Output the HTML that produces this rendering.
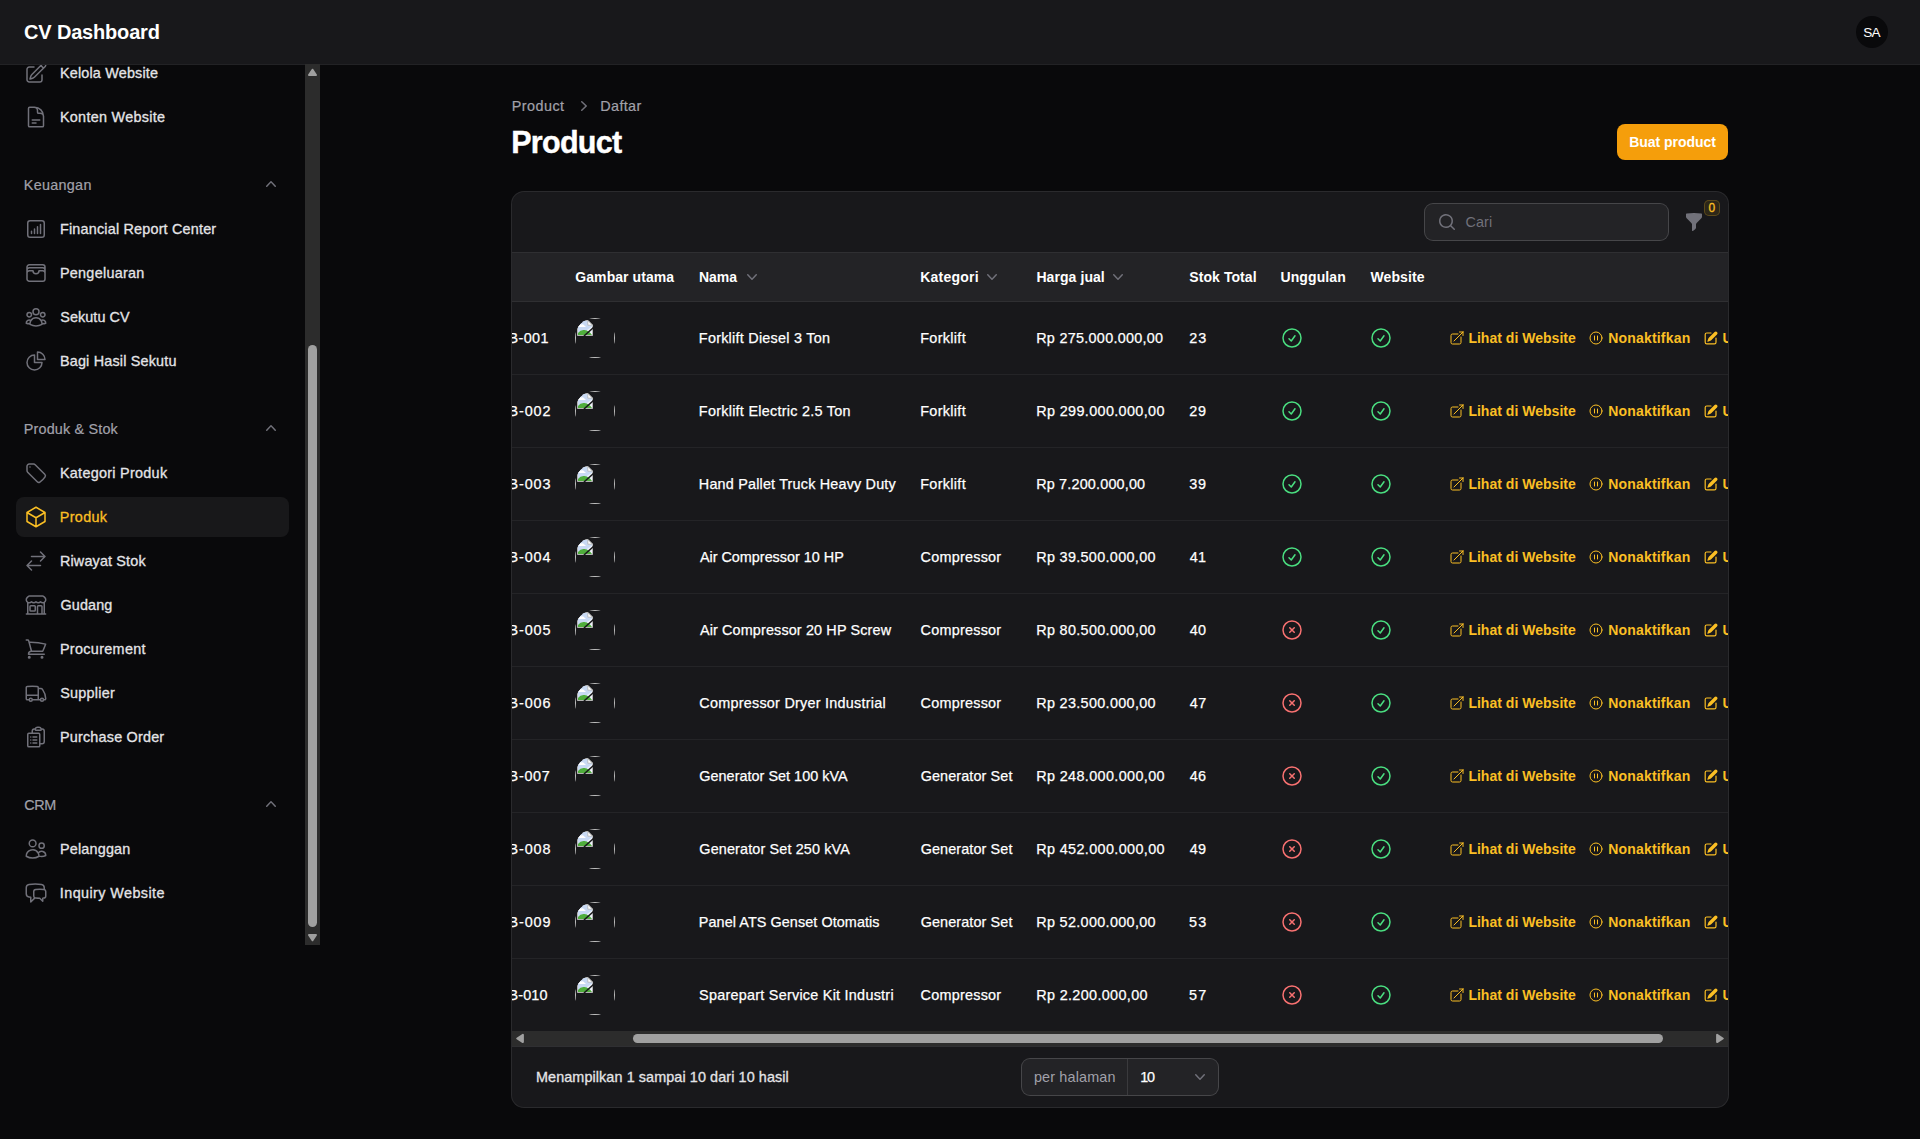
<!DOCTYPE html><html><head><meta charset="utf-8"><title>Product - CV Dashboard</title><style>
*{box-sizing:border-box;margin:0;padding:0}
html,body{width:1920px;height:1139px;overflow:hidden;background:#09090b}
body{font-family:"Liberation Sans",sans-serif;font-size:14px;color:#fff;position:relative;-webkit-font-smoothing:antialiased}
.t{position:absolute;white-space:nowrap;display:block}
.i{position:absolute;display:block;overflow:visible}
.a{position:absolute}
#topbar{left:0;top:0;width:1920px;height:64px;background:#18181b;box-shadow:0 1px 0 0 #222225}
.brand{font-size:20px;font-weight:700;color:#fff}
.nav{font-size:14.4px;color:#e4e4e7;-webkit-text-stroke:.3px #e4e4e7}
.nav.act{color:#fbbf24;-webkit-text-stroke:.3px #fbbf24}
.grp{font-size:14.4px;color:#a1a1aa;-webkit-text-stroke:.2px #a1a1aa}
.bc{font-size:14.4px;color:#a1a1aa;-webkit-text-stroke:.2px #a1a1aa}
.h1{font-size:30.5px;font-weight:700;color:#fff;-webkit-text-stroke:.4px #fff}
.btn{font-size:14px;font-weight:700;color:#fff}
.th{font-size:14px;font-weight:700;color:#fff}
.td{font-size:14.4px;color:#fff;-webkit-text-stroke:.25px #fff}
.lnk{font-size:14px;font-weight:700;color:#fbbf24}
.ph{font-size:14.4px;color:#71717a}
.pg{font-size:14.4px;color:#e4e4e7;-webkit-text-stroke:.3px #e4e4e7}
.pre{font-size:14.4px;color:#a1a1aa}
.av{font-size:13.6px;color:#fff}
.bdg{font-size:12px;color:#fbbf24;-webkit-text-stroke:.3px #fbbf24}
</style></head><body><div class="a" id="sidebar" style="left:0;top:65px;width:305px;height:880px;overflow:hidden"><svg class="i" viewBox="0 0 24 24" style="left:24px;top:-4px;width:24px;height:24px;color:#71717a;"><g fill="none" stroke="currentColor" stroke-width="1.5" stroke-linecap="round" stroke-linejoin="round"><path d="M16.862 4.487l1.687-1.688a1.875 1.875 0 112.652 2.652L10.582 16.07a4.5 4.5 0 01-1.897 1.13L6 18l.8-2.685a4.5 4.5 0 011.13-1.897l8.932-8.931zm0 0L19.5 7.125M18 14v4.75A2.25 2.25 0 0115.75 21H5.25A2.25 2.25 0 013 18.75V8.25A2.25 2.25 0 015.25 6H10"/></g></svg><span class="t nav" style="left:59.96px;top:-2.0px;line-height:20px;letter-spacing:0.178px;">Kelola Website</span><svg class="i" viewBox="0 0 24 24" style="left:24px;top:40px;width:24px;height:24px;color:#71717a;"><g fill="none" stroke="currentColor" stroke-width="1.5" stroke-linecap="round" stroke-linejoin="round"><path d="M19.5 14.25v-2.625a3.375 3.375 0 00-3.375-3.375h-1.5A1.125 1.125 0 0113.5 7.125v-1.5a3.375 3.375 0 00-3.375-3.375H8.25m0 12.75h7.5m-7.5 3H12M10.5 2.25H5.625c-.621 0-1.125.504-1.125 1.125v17.25c0 .621.504 1.125 1.125 1.125h12.75c.621 0 1.125-.504 1.125-1.125V11.25a9 9 0 00-9-9z"/></g></svg><span class="t nav" style="left:59.96px;top:42.0px;line-height:20px;letter-spacing:0.285px;">Konten Website</span><span class="t grp" style="left:23.81px;top:108.0px;line-height:24px;letter-spacing:0.282px;">Keuangan</span><svg class="i" viewBox="0 0 20 20" style="left:261px;top:109px;width:20px;height:20px;color:#71717a;"><g fill="currentColor"><path fill-rule="evenodd" clip-rule="evenodd" d="M14.77 12.79a.75.75 0 01-1.06-.02L10 8.832 6.29 12.77a.75.75 0 11-1.08-1.04l4.25-4.5a.75.75 0 011.08 0l4.25 4.5a.75.75 0 01-.02 1.06z"/></g></svg><svg class="i" viewBox="0 0 24 24" style="left:24px;top:152px;width:24px;height:24px;color:#71717a;"><g fill="none" stroke="currentColor" stroke-width="1.5" stroke-linecap="round" stroke-linejoin="round"><path d="M7.5 14.25v2.25m3-4.5v4.5m3-6.75v6.75m3-9v9M6 20.25h12A2.25 2.25 0 0020.25 18V6A2.25 2.25 0 0018 3.75H6A2.25 2.25 0 003.75 6v12A2.25 2.25 0 006 20.25z"/></g></svg><span class="t nav" style="left:59.96px;top:154.0px;line-height:20px;letter-spacing:0.192px;">Financial Report Center</span><svg class="i" viewBox="0 0 24 24" style="left:24px;top:196px;width:24px;height:24px;color:#71717a;"><g fill="none" stroke="currentColor" stroke-width="1.5" stroke-linecap="round" stroke-linejoin="round"><path d="M21 12a2.25 2.25 0 00-2.25-2.25H15a3 3 0 11-6 0H5.25A2.25 2.25 0 003 12m18 0v6a2.25 2.25 0 01-2.25 2.25H5.25A2.25 2.25 0 013 18v-6m18 0V9M3 12V9m18 0a2.25 2.25 0 00-2.25-2.25H5.25A2.25 2.25 0 003 9m18 0V6a2.25 2.25 0 00-2.25-2.25H5.25A2.25 2.25 0 003 6v3"/></g></svg><span class="t nav" style="left:59.96px;top:198.0px;line-height:20px;letter-spacing:0.271px;">Pengeluaran</span><svg class="i" viewBox="0 0 24 24" style="left:24px;top:240px;width:24px;height:24px;color:#71717a;"><g fill="none" stroke="currentColor" stroke-width="1.5" stroke-linecap="round" stroke-linejoin="round"><path d="M18 18.72a9.094 9.094 0 003.741-.479 3 3 0 00-4.682-2.72m.94 3.198l.001.031c0 .225-.012.447-.037.666A11.944 11.944 0 0112 21c-2.17 0-4.207-.576-5.963-1.584A6.062 6.062 0 016 18.719m12 0a5.971 5.971 0 00-.941-3.197m0 0A5.995 5.995 0 0012 12.75a5.995 5.995 0 00-5.058 2.772m0 0a3 3 0 00-4.681 2.72 8.986 8.986 0 003.74.477m.94-3.197a5.971 5.971 0 00-.94 3.197M15 6.75a3 3 0 11-6 0 3 3 0 016 0zm6 3a2.25 2.25 0 11-4.5 0 2.25 2.25 0 014.5 0zm-13.5 0a2.25 2.25 0 11-4.5 0 2.25 2.25 0 014.5 0z"/></g></svg><span class="t nav" style="left:60.28px;top:242.0px;line-height:20px;letter-spacing:0.068px;">Sekutu CV</span><svg class="i" viewBox="0 0 24 24" style="left:24px;top:284px;width:24px;height:24px;color:#71717a;"><g fill="none" stroke="currentColor" stroke-width="1.5" stroke-linecap="round" stroke-linejoin="round"><path d="M10.5 6a7.5 7.5 0 107.5 7.5h-7.5V6z"/><path d="M13.5 10.5H21A7.5 7.5 0 0013.5 3v7.5z"/></g></svg><span class="t nav" style="left:59.96px;top:286.0px;line-height:20px;letter-spacing:0.181px;">Bagi Hasil Sekutu</span><span class="t grp" style="left:23.81px;top:352.0px;line-height:24px;letter-spacing:0.169px;">Produk &amp; Stok</span><svg class="i" viewBox="0 0 20 20" style="left:261px;top:353px;width:20px;height:20px;color:#71717a;"><g fill="currentColor"><path fill-rule="evenodd" clip-rule="evenodd" d="M14.77 12.79a.75.75 0 01-1.06-.02L10 8.832 6.29 12.77a.75.75 0 11-1.08-1.04l4.25-4.5a.75.75 0 011.08 0l4.25 4.5a.75.75 0 01-.02 1.06z"/></g></svg><svg class="i" viewBox="0 0 24 24" style="left:24px;top:396px;width:24px;height:24px;color:#71717a;"><g fill="none" stroke="currentColor" stroke-width="1.5" stroke-linecap="round" stroke-linejoin="round"><path d="M9.568 3H5.25A2.25 2.25 0 003 5.25v4.318c0 .597.237 1.17.659 1.591l9.581 9.581c.699.699 1.78.872 2.607.33a18.095 18.095 0 005.223-5.223c.542-.827.369-1.908-.33-2.607L11.16 3.66A2.25 2.25 0 009.568 3z"/><path d="M6 6h.008v.008H6V6z"/></g></svg><span class="t nav" style="left:59.96px;top:398.0px;line-height:20px;letter-spacing:0.282px;">Kategori Produk</span><div class="a" style="left:16px;top:432px;width:273px;height:40px;border-radius:8px;background:#18181a"></div><svg class="i" viewBox="0 0 24 24" style="left:24px;top:440px;width:24px;height:24px;color:#fbbf24;"><g fill="none" stroke="currentColor" stroke-width="1.5" stroke-linecap="round" stroke-linejoin="round"><path d="M21 7.5l-9-5.25L3 7.5m18 0l-9 5.25m9-5.25v9l-9 5.25M3 7.5l9 5.25M3 7.5v9l9 5.25m0-9v9"/></g></svg><span class="t nav act" style="left:59.73px;top:442.0px;line-height:20px;letter-spacing:0.342px;">Produk</span><svg class="i" viewBox="0 0 24 24" style="left:24px;top:484px;width:24px;height:24px;color:#71717a;"><g fill="none" stroke="currentColor" stroke-width="1.5" stroke-linecap="round" stroke-linejoin="round"><path d="M7.5 21L3 16.5m0 0L7.5 12M3 16.5h13.5m0-13.5L21 7.5m0 0L16.5 12M21 7.5H7.5"/></g></svg><span class="t nav" style="left:59.96px;top:486.0px;line-height:20px;letter-spacing:0.151px;">Riwayat Stok</span><svg class="i" viewBox="0 0 24 24" style="left:24px;top:528px;width:24px;height:24px;color:#71717a;"><g fill="none" stroke="currentColor" stroke-width="1.5" stroke-linecap="round" stroke-linejoin="round"><path d="M13.5 21v-7.5a.75.75 0 01.75-.75h3a.75.75 0 01.75.75V21m-4.5 0H2.36m11.14 0H18m0 0h3.64m-1.39 0V9.349m-16.5 11.65V9.35m0 0a3.001 3.001 0 003.75-.615A2.993 2.993 0 009.75 9.75c.896 0 1.7-.393 2.25-1.016a2.993 2.993 0 002.25 1.016c.896 0 1.7-.393 2.25-1.016a3.001 3.001 0 003.75.614m-16.5 0a3.004 3.004 0 01-.621-4.72L4.318 3.44A1.5 1.5 0 015.378 3h13.243a1.5 1.5 0 011.06.44l1.19 1.189a3 3 0 01-.621 4.72m-13.5 8.65h3.75a.75.75 0 00.75-.75V13.5a.75.75 0 00-.75-.75H6.75a.75.75 0 00-.75.75v3.75c0 .415.336.75.75.75z"/></g></svg><span class="t nav" style="left:60.45px;top:530.0px;line-height:20px;letter-spacing:0.133px;">Gudang</span><svg class="i" viewBox="0 0 24 24" style="left:24px;top:572px;width:24px;height:24px;color:#71717a;"><g fill="none" stroke="currentColor" stroke-width="1.5" stroke-linecap="round" stroke-linejoin="round"><path d="M2.25 3h1.386c.51 0 .955.343 1.087.835l.383 1.437M7.5 14.25a3 3 0 00-3 3h15.75m-12.75-3h11.218c1.121-2.3 2.1-4.684 2.924-7.138a60.114 60.114 0 00-16.536-1.84M7.5 14.25L5.106 5.272M6 20.25a.75.75 0 11-1.5 0 .75.75 0 011.5 0zm12.75 0a.75.75 0 11-1.5 0 .75.75 0 011.5 0z"/></g></svg><span class="t nav" style="left:59.96px;top:574.0px;line-height:20px;letter-spacing:0.320px;">Procurement</span><svg class="i" viewBox="0 0 24 24" style="left:24px;top:616px;width:24px;height:24px;color:#71717a;"><g fill="none" stroke="currentColor" stroke-width="1.5" stroke-linecap="round" stroke-linejoin="round"><path d="M8.25 18.75a1.5 1.5 0 01-3 0m3 0a1.5 1.5 0 00-3 0m3 0h6m-9 0H3.375a1.125 1.125 0 01-1.125-1.125V14.25m17.25 4.5a1.5 1.5 0 01-3 0m3 0a1.5 1.5 0 00-3 0m3 0h1.125c.621 0 1.129-.504 1.09-1.124a17.902 17.902 0 00-3.213-9.193 2.056 2.056 0 00-1.58-.86H14.25M16.5 18.75h-2.25m0-11.177v-.958c0-.568-.422-1.048-.987-1.106a48.554 48.554 0 00-10.026 0 1.106 1.106 0 00-.987 1.106v7.635m12-6.677v6.677m0 4.5v-4.5m0 0h-12"/></g></svg><span class="t nav" style="left:60.28px;top:618.0px;line-height:20px;letter-spacing:0.230px;">Supplier</span><svg class="i" viewBox="0 0 24 24" style="left:24px;top:660px;width:24px;height:24px;color:#71717a;"><g fill="none" stroke="currentColor" stroke-width="1.5" stroke-linecap="round" stroke-linejoin="round"><path d="M9 12h3.75M9 15h3.75M9 18h3.75m3 .75H18a2.25 2.25 0 002.25-2.25V6.108c0-1.135-.845-2.098-1.976-2.192a48.424 48.424 0 00-1.123-.08m-5.801 0c-.065.21-.1.433-.1.664 0 .414.336.75.75.75h4.5a.75.75 0 00.75-.75 2.25 2.25 0 00-.1-.664m-5.8 0A2.251 2.251 0 0113.5 2.25H15c1.012 0 1.867.668 2.15 1.586m-5.8 0c-.376.023-.75.05-1.124.08C9.095 4.01 8.25 4.973 8.25 6.108V8.25m0 0H4.875c-.621 0-1.125.504-1.125 1.125v11.25c0 .621.504 1.125 1.125 1.125h9.75c.621 0 1.125-.504 1.125-1.125V9.375c0-.621-.504-1.125-1.125-1.125H8.25zM6.75 12h.008v.008H6.75V12zm0 3h.008v.008H6.75V15zm0 3h.008v.008H6.75V18z"/></g></svg><span class="t nav" style="left:59.96px;top:662.0px;line-height:20px;letter-spacing:0.202px;">Purchase Order</span><span class="t grp" style="left:24.23px;top:728.0px;line-height:24px;letter-spacing:-0.422px;">CRM</span><svg class="i" viewBox="0 0 20 20" style="left:261px;top:729px;width:20px;height:20px;color:#71717a;"><g fill="currentColor"><path fill-rule="evenodd" clip-rule="evenodd" d="M14.77 12.79a.75.75 0 01-1.06-.02L10 8.832 6.29 12.77a.75.75 0 11-1.08-1.04l4.25-4.5a.75.75 0 011.08 0l4.25 4.5a.75.75 0 01-.02 1.06z"/></g></svg><svg class="i" viewBox="0 0 24 24" style="left:24px;top:772px;width:24px;height:24px;color:#71717a;"><g fill="none" stroke="currentColor" stroke-width="1.5" stroke-linecap="round" stroke-linejoin="round"><path d="M15 19.128a9.38 9.38 0 002.625.372 9.337 9.337 0 004.121-.952 4.125 4.125 0 00-7.533-2.493M15 19.128v-.003c0-1.113-.285-2.16-.786-3.07M15 19.128v.106A12.318 12.318 0 018.624 21c-2.331 0-4.512-.645-6.374-1.766l-.001-.109a6.375 6.375 0 0111.964-3.07M12 6.375a3.375 3.375 0 11-6.75 0 3.375 3.375 0 016.75 0zm8.25 2.25a2.625 2.625 0 11-5.25 0 2.625 2.625 0 015.25 0z"/></g></svg><span class="t nav" style="left:59.96px;top:774.0px;line-height:20px;letter-spacing:0.188px;">Pelanggan</span><svg class="i" viewBox="0 0 24 24" style="left:24px;top:816px;width:24px;height:24px;color:#71717a;"><g fill="none" stroke="currentColor" stroke-width="1.5" stroke-linecap="round" stroke-linejoin="round"><path d="M20.25 8.511c.884.284 1.5 1.128 1.5 2.097v4.286c0 1.136-.847 2.1-1.98 2.193-.34.027-.68.052-1.02.072v3.091l-3-3c-1.354 0-2.694-.055-4.02-.163a2.115 2.115 0 01-.825-.242m9.345-8.334a2.126 2.126 0 00-.476-.095 48.64 48.64 0 00-8.048 0c-1.131.094-1.976 1.057-1.976 2.192v4.286c0 .837.46 1.58 1.155 1.951m9.345-8.334V6.637c0-1.621-1.152-3.026-2.76-3.235A48.455 48.455 0 0011.25 3c-2.115 0-4.198.137-6.24.402-1.608.209-2.76 1.614-2.76 3.235v6.226c0 1.621 1.152 3.026 2.76 3.235.577.075 1.157.14 1.74.194V21l4.155-4.155"/></g></svg><span class="t nav" style="left:59.80px;top:818.0px;line-height:20px;letter-spacing:0.414px;">Inquiry Website</span></div><div class="a" style="left:305px;top:64px;width:15px;height:881px;background:#2c2c2c;z-index:3"><svg class="i" style="left:0;top:1px;width:15px;height:15px"><path d="M7.5 4.7 L11 10 H4 Z" fill="#a0a0a0" stroke="#a0a0a0" stroke-width="2" stroke-linejoin="round"/></svg><div class="a" style="left:3px;top:281px;width:9px;height:582px;border-radius:4.5px;background:#a0a0a0"></div><svg class="i" style="left:0;top:866px;width:15px;height:15px"><path d="M7.5 10.3 L11 5 H4 Z" fill="#a0a0a0" stroke="#a0a0a0" stroke-width="2" stroke-linejoin="round"/></svg></div><div class="a" id="topbar"></div><span class="t brand" style="left:24.12px;top:18.0px;line-height:28px;letter-spacing:-0.182px;">CV Dashboard</span><div class="a" style="left:1856px;top:16px;width:32px;height:32px;border-radius:50%;background:#09090b"></div><span class="t av" style="left:1863.37px;top:24.5px;line-height:16px;letter-spacing:-0.821px;">SA</span><span class="t bc" style="left:511.81px;top:96.0px;line-height:20px;letter-spacing:0.444px;">Product</span><svg class="i" viewBox="0 0 20 20" style="left:574px;top:96px;width:20px;height:20px;color:#71717a;"><g fill="currentColor"><path fill-rule="evenodd" clip-rule="evenodd" d="M7.21 14.77a.75.75 0 01.02-1.06L11.168 10 7.23 6.29a.75.75 0 111.04-1.08l4.5 4.25a.75.75 0 010 1.08l-4.5 4.25a.75.75 0 01-1.06-.02z"/></g></svg><span class="t bc" style="left:600.35px;top:96.0px;line-height:20px;letter-spacing:0.341px;">Daftar</span><span class="t h1" style="left:511.19px;top:124.0px;line-height:36px;letter-spacing:-0.708px;">Product</span><div class="a" style="left:1617px;top:124px;width:111px;height:36px;border-radius:8px;background:#f59e0b"></div><span class="t btn" style="left:1629.24px;top:132.0px;line-height:20px;letter-spacing:-0.034px;">Buat product</span><div class="a" id="card" style="left:512px;top:192px;width:1216px;height:915px;border-radius:12px;background:#18181b;box-shadow:0 0 0 1px #2a2a2d;overflow:hidden"><div class="a" style="left:913px;top:12px;width:243px;height:36px;border-radius:8px;background:#232326;box-shadow:0 0 0 1px #464649"></div><svg class="i" viewBox="0 0 20 20" style="left:925px;top:20px;width:20px;height:20px;color:#71717a;"><g fill="currentColor"><path fill-rule="evenodd" clip-rule="evenodd" d="M9 3.5a5.5 5.5 0 100 11 5.5 5.5 0 000-11zM2 9a7 7 0 1112.452 4.391l3.328 3.329a.75.75 0 11-1.06 1.06l-3.329-3.328A7 7 0 012 9z"/></g></svg><span class="t ph" style="left:953.51px;top:18.0px;line-height:24px;letter-spacing:0.084px;">Cari</span><svg class="i" viewBox="0 0 20 20" style="left:1172px;top:20px;width:20px;height:20px;color:#71717a;"><g fill="currentColor"><path fill-rule="evenodd" clip-rule="evenodd" d="M2.628 1.601C5.028 1.206 7.49 1 10 1s4.973.206 7.372.601a.75.75 0 01.628.74v2.288a2.25 2.25 0 01-.659 1.59l-4.682 4.683a2.25 2.25 0 00-.659 1.59v3.037c0 .684-.31 1.33-.844 1.757l-1.937 1.55A.75.75 0 018 18.25v-5.757a2.25 2.25 0 00-.659-1.591L2.659 6.22A2.25 2.25 0 012 4.629V2.34a.75.75 0 01.628-.74z"/></g></svg><div class="a" style="left:1192.2px;top:8.400000000000006px;width:15.6px;height:15.2px;border-radius:5px;background:#2d2718;box-shadow:inset 0 0 0 1px #5c4a1c"></div><span class="t bdg" style="left:1196.50px;top:8.0px;line-height:16px;letter-spacing:0.000px;">0</span><div class="a" style="left:0;top:60px;width:1216px;height:1px;background:#2f2f32"></div><div class="a" style="left:0;top:61px;width:1216px;height:48px;background:#232326"></div><div class="a" style="left:0;top:109px;width:1216px;height:1px;background:#2f2f32"></div><span class="t th" style="left:63.30px;top:75.0px;line-height:20px;letter-spacing:0.069px;">Gambar utama</span><span class="t th" style="left:187.02px;top:75.0px;line-height:20px;letter-spacing:-0.021px;">Nama</span><svg class="i" viewBox="0 0 20 20" style="left:229.5px;top:75px;width:20px;height:20px;color:#71717a;"><g fill="currentColor"><path fill-rule="evenodd" clip-rule="evenodd" d="M5.23 7.21a.75.75 0 011.06.02L10 11.168l3.71-3.938a.75.75 0 111.08 1.04l-4.25 4.5a.75.75 0 01-1.08 0l-4.25-4.5a.75.75 0 01.02-1.06z"/></g></svg><span class="t th" style="left:408.13px;top:75.0px;line-height:20px;letter-spacing:0.247px;">Kategori</span><svg class="i" viewBox="0 0 20 20" style="left:470.20000000000005px;top:75px;width:20px;height:20px;color:#71717a;"><g fill="currentColor"><path fill-rule="evenodd" clip-rule="evenodd" d="M5.23 7.21a.75.75 0 011.06.02L10 11.168l3.71-3.938a.75.75 0 111.08 1.04l-4.25 4.5a.75.75 0 01-1.08 0l-4.25-4.5a.75.75 0 01.02-1.06z"/></g></svg><span class="t th" style="left:524.43px;top:75.0px;line-height:20px;letter-spacing:0.072px;">Harga jual</span><svg class="i" viewBox="0 0 20 20" style="left:596.4000000000001px;top:75px;width:20px;height:20px;color:#71717a;"><g fill="currentColor"><path fill-rule="evenodd" clip-rule="evenodd" d="M5.23 7.21a.75.75 0 011.06.02L10 11.168l3.71-3.938a.75.75 0 111.08 1.04l-4.25 4.5a.75.75 0 01-1.08 0l-4.25-4.5a.75.75 0 01.02-1.06z"/></g></svg><span class="t th" style="left:677.37px;top:75.0px;line-height:20px;letter-spacing:0.063px;">Stok Total</span><span class="t th" style="left:768.49px;top:75.0px;line-height:20px;letter-spacing:0.103px;">Unggulan</span><span class="t th" style="left:858.51px;top:75.0px;line-height:20px;letter-spacing:0.107px;">Website</span><span class="t td" style="left:-3.40px;top:136.0px;line-height:20px;letter-spacing:0.35px">B-001</span><svg class="i" style="left:63px;top:126px;width:40px;height:40px" viewBox="0 0 40 40"><defs><clipPath id="cc0"><circle cx="20" cy="20" r="20"/></clipPath></defs><g clip-path="url(#cc0)"><rect x="0.5" y="0.5" width="39" height="39" fill="none" stroke="#c0c0c0" stroke-width="1"/><g transform="translate(2,2)"><path d="M0.5 0.5 H11 L15.5 5 V15.5 H0.5 Z" fill="#f4f6fb" stroke="#b4b4b4" stroke-width="1"/><path d="M1 1 H10.8 L15 5.2 V15 H1 Z" fill="#c9daf4"/><path d="M1 5.2 Q2.5 3.2 4.2 4.4 Q6.2 3.6 7.2 5.4 Q8.8 5.6 8.6 7 H1 Z" fill="#ffffff"/><path d="M10 10 L15 6.5 V15 H10 Z" fill="#eef2fa"/><path d="M1 15 V13 Q3.5 9.5 7.5 10 Q12 10.5 15 15 Z" fill="#4fae3c"/><path d="M10.8 0.6 V5.2 H15.4 Z" fill="#ffffff" stroke="#b4b4b4" stroke-width=".8"/><path d="M7 16 L16.5 7.5" stroke="#18181b" stroke-width="1.6"/></g></g></svg><span class="t td" style="left:186.86px;top:136.0px;line-height:20px;letter-spacing:0.246px;">Forklift Diesel 3 Ton</span><span class="t td" style="left:408.22px;top:136.0px;line-height:20px;letter-spacing:0.330px;">Forklift</span><span class="t td" style="left:524.20px;top:136.0px;line-height:20px;letter-spacing:0.281px;">Rp 275.000.000,00</span><span class="t td" style="left:677.29px;top:136.0px;line-height:20px;letter-spacing:0.864px;">23</span><svg class="i" viewBox="0 0 24 24" style="left:768px;top:134px;width:24px;height:24px;color:#4ade80;"><g fill="none" stroke="currentColor" stroke-width="1.5" stroke-linecap="round" stroke-linejoin="round"><path d="M9 12.75L11.25 15 15 9.75M21 12a9 9 0 11-18 0 9 9 0 0118 0z"/></g></svg><svg class="i" viewBox="0 0 24 24" style="left:857px;top:134px;width:24px;height:24px;color:#4ade80;"><g fill="none" stroke="currentColor" stroke-width="1.5" stroke-linecap="round" stroke-linejoin="round"><path d="M9 12.75L11.25 15 15 9.75M21 12a9 9 0 11-18 0 9 9 0 0118 0z"/></g></svg><svg class="i" viewBox="0 0 24 24" style="left:937.2px;top:138px;width:16px;height:16px;color:#fbbf24;"><g fill="none" stroke="currentColor" stroke-width="1.5" stroke-linecap="round" stroke-linejoin="round"><path d="M13.5 6H5.25A2.25 2.25 0 003 8.25v10.5A2.25 2.25 0 005.25 21h10.5A2.25 2.25 0 0018 18.75V10.5m-10.5 6L21 3m0 0h-5.25M21 3v5.25"/></g></svg><span class="t lnk" style="left:956.38px;top:136.0px;line-height:20px;letter-spacing:0.022px;">Lihat di Website</span><svg class="i" viewBox="0 0 24 24" style="left:1075.7px;top:138px;width:16px;height:16px;color:#fbbf24;"><g fill="none" stroke="currentColor" stroke-width="1.5" stroke-linecap="round" stroke-linejoin="round"><path d="M14.25 9v6m-4.5 0V9M21 12a9 9 0 11-18 0 9 9 0 0118 0z"/></g></svg><span class="t lnk" style="left:1096.20px;top:136.0px;line-height:20px;letter-spacing:0.189px;">Nonaktifkan</span><svg class="i" viewBox="0 0 20 20" style="left:1190.8px;top:138px;width:16px;height:16px;color:#fbbf24;"><g fill="currentColor"><path fill-rule="evenodd" clip-rule="evenodd" d="M5.433 13.917l1.262-3.155A4 4 0 017.58 9.42l6.92-6.918a2.121 2.121 0 013 3l-6.92 6.918c-.383.383-.84.685-1.343.886l-3.154 1.262a.5.5 0 01-.65-.65z"/><path fill-rule="evenodd" clip-rule="evenodd" d="M3.5 5.75c0-.69.56-1.25 1.25-1.25H10A.75.75 0 0010 3H4.75A2.75 2.75 0 002 5.75v9.5A2.75 2.75 0 004.75 18h9.5A2.75 2.75 0 0017 15.25V10a.75.75 0 00-1.5 0v5.25c0 .69-.56 1.25-1.25 1.25h-9.5c-.69 0-1.25-.56-1.25-1.25v-9.5z"/></g></svg><span class="t lnk" style="left:1210.50px;top:136.0px;line-height:20px;letter-spacing:0.333px;">Ubah</span><div class="a" style="left:0;top:182px;width:1216px;height:1px;background:#242427"></div><span class="t td" style="left:-3.40px;top:209.0px;line-height:20px;letter-spacing:0.85px">B-002</span><svg class="i" style="left:63px;top:199px;width:40px;height:40px" viewBox="0 0 40 40"><defs><clipPath id="cc1"><circle cx="20" cy="20" r="20"/></clipPath></defs><g clip-path="url(#cc1)"><rect x="0.5" y="0.5" width="39" height="39" fill="none" stroke="#c0c0c0" stroke-width="1"/><g transform="translate(2,2)"><path d="M0.5 0.5 H11 L15.5 5 V15.5 H0.5 Z" fill="#f4f6fb" stroke="#b4b4b4" stroke-width="1"/><path d="M1 1 H10.8 L15 5.2 V15 H1 Z" fill="#c9daf4"/><path d="M1 5.2 Q2.5 3.2 4.2 4.4 Q6.2 3.6 7.2 5.4 Q8.8 5.6 8.6 7 H1 Z" fill="#ffffff"/><path d="M10 10 L15 6.5 V15 H10 Z" fill="#eef2fa"/><path d="M1 15 V13 Q3.5 9.5 7.5 10 Q12 10.5 15 15 Z" fill="#4fae3c"/><path d="M10.8 0.6 V5.2 H15.4 Z" fill="#ffffff" stroke="#b4b4b4" stroke-width=".8"/><path d="M7 16 L16.5 7.5" stroke="#18181b" stroke-width="1.6"/></g></g></svg><span class="t td" style="left:186.86px;top:209.0px;line-height:20px;letter-spacing:0.263px;">Forklift Electric 2.5 Ton</span><span class="t td" style="left:408.22px;top:209.0px;line-height:20px;letter-spacing:0.330px;">Forklift</span><span class="t td" style="left:524.20px;top:209.0px;line-height:20px;letter-spacing:0.365px;">Rp 299.000.000,00</span><span class="t td" style="left:677.29px;top:209.0px;line-height:20px;letter-spacing:0.800px;">29</span><svg class="i" viewBox="0 0 24 24" style="left:768px;top:207px;width:24px;height:24px;color:#4ade80;"><g fill="none" stroke="currentColor" stroke-width="1.5" stroke-linecap="round" stroke-linejoin="round"><path d="M9 12.75L11.25 15 15 9.75M21 12a9 9 0 11-18 0 9 9 0 0118 0z"/></g></svg><svg class="i" viewBox="0 0 24 24" style="left:857px;top:207px;width:24px;height:24px;color:#4ade80;"><g fill="none" stroke="currentColor" stroke-width="1.5" stroke-linecap="round" stroke-linejoin="round"><path d="M9 12.75L11.25 15 15 9.75M21 12a9 9 0 11-18 0 9 9 0 0118 0z"/></g></svg><svg class="i" viewBox="0 0 24 24" style="left:937.2px;top:211px;width:16px;height:16px;color:#fbbf24;"><g fill="none" stroke="currentColor" stroke-width="1.5" stroke-linecap="round" stroke-linejoin="round"><path d="M13.5 6H5.25A2.25 2.25 0 003 8.25v10.5A2.25 2.25 0 005.25 21h10.5A2.25 2.25 0 0018 18.75V10.5m-10.5 6L21 3m0 0h-5.25M21 3v5.25"/></g></svg><span class="t lnk" style="left:956.38px;top:209.0px;line-height:20px;letter-spacing:0.022px;">Lihat di Website</span><svg class="i" viewBox="0 0 24 24" style="left:1075.7px;top:211px;width:16px;height:16px;color:#fbbf24;"><g fill="none" stroke="currentColor" stroke-width="1.5" stroke-linecap="round" stroke-linejoin="round"><path d="M14.25 9v6m-4.5 0V9M21 12a9 9 0 11-18 0 9 9 0 0118 0z"/></g></svg><span class="t lnk" style="left:1096.20px;top:209.0px;line-height:20px;letter-spacing:0.189px;">Nonaktifkan</span><svg class="i" viewBox="0 0 20 20" style="left:1190.8px;top:211px;width:16px;height:16px;color:#fbbf24;"><g fill="currentColor"><path fill-rule="evenodd" clip-rule="evenodd" d="M5.433 13.917l1.262-3.155A4 4 0 017.58 9.42l6.92-6.918a2.121 2.121 0 013 3l-6.92 6.918c-.383.383-.84.685-1.343.886l-3.154 1.262a.5.5 0 01-.65-.65z"/><path fill-rule="evenodd" clip-rule="evenodd" d="M3.5 5.75c0-.69.56-1.25 1.25-1.25H10A.75.75 0 0010 3H4.75A2.75 2.75 0 002 5.75v9.5A2.75 2.75 0 004.75 18h9.5A2.75 2.75 0 0017 15.25V10a.75.75 0 00-1.5 0v5.25c0 .69-.56 1.25-1.25 1.25h-9.5c-.69 0-1.25-.56-1.25-1.25v-9.5z"/></g></svg><span class="t lnk" style="left:1210.50px;top:209.0px;line-height:20px;letter-spacing:0.333px;">Ubah</span><div class="a" style="left:0;top:255px;width:1216px;height:1px;background:#242427"></div><span class="t td" style="left:-3.40px;top:282.0px;line-height:20px;letter-spacing:0.85px">B-003</span><svg class="i" style="left:63px;top:272px;width:40px;height:40px" viewBox="0 0 40 40"><defs><clipPath id="cc2"><circle cx="20" cy="20" r="20"/></clipPath></defs><g clip-path="url(#cc2)"><rect x="0.5" y="0.5" width="39" height="39" fill="none" stroke="#c0c0c0" stroke-width="1"/><g transform="translate(2,2)"><path d="M0.5 0.5 H11 L15.5 5 V15.5 H0.5 Z" fill="#f4f6fb" stroke="#b4b4b4" stroke-width="1"/><path d="M1 1 H10.8 L15 5.2 V15 H1 Z" fill="#c9daf4"/><path d="M1 5.2 Q2.5 3.2 4.2 4.4 Q6.2 3.6 7.2 5.4 Q8.8 5.6 8.6 7 H1 Z" fill="#ffffff"/><path d="M10 10 L15 6.5 V15 H10 Z" fill="#eef2fa"/><path d="M1 15 V13 Q3.5 9.5 7.5 10 Q12 10.5 15 15 Z" fill="#4fae3c"/><path d="M10.8 0.6 V5.2 H15.4 Z" fill="#ffffff" stroke="#b4b4b4" stroke-width=".8"/><path d="M7 16 L16.5 7.5" stroke="#18181b" stroke-width="1.6"/></g></g></svg><span class="t td" style="left:186.86px;top:282.0px;line-height:20px;letter-spacing:0.182px;">Hand Pallet Truck Heavy Duty</span><span class="t td" style="left:408.22px;top:282.0px;line-height:20px;letter-spacing:0.330px;">Forklift</span><span class="t td" style="left:524.20px;top:282.0px;line-height:20px;letter-spacing:0.180px;">Rp 7.200.000,00</span><span class="t td" style="left:677.31px;top:282.0px;line-height:20px;letter-spacing:0.775px;">39</span><svg class="i" viewBox="0 0 24 24" style="left:768px;top:280px;width:24px;height:24px;color:#4ade80;"><g fill="none" stroke="currentColor" stroke-width="1.5" stroke-linecap="round" stroke-linejoin="round"><path d="M9 12.75L11.25 15 15 9.75M21 12a9 9 0 11-18 0 9 9 0 0118 0z"/></g></svg><svg class="i" viewBox="0 0 24 24" style="left:857px;top:280px;width:24px;height:24px;color:#4ade80;"><g fill="none" stroke="currentColor" stroke-width="1.5" stroke-linecap="round" stroke-linejoin="round"><path d="M9 12.75L11.25 15 15 9.75M21 12a9 9 0 11-18 0 9 9 0 0118 0z"/></g></svg><svg class="i" viewBox="0 0 24 24" style="left:937.2px;top:284px;width:16px;height:16px;color:#fbbf24;"><g fill="none" stroke="currentColor" stroke-width="1.5" stroke-linecap="round" stroke-linejoin="round"><path d="M13.5 6H5.25A2.25 2.25 0 003 8.25v10.5A2.25 2.25 0 005.25 21h10.5A2.25 2.25 0 0018 18.75V10.5m-10.5 6L21 3m0 0h-5.25M21 3v5.25"/></g></svg><span class="t lnk" style="left:956.38px;top:282.0px;line-height:20px;letter-spacing:0.022px;">Lihat di Website</span><svg class="i" viewBox="0 0 24 24" style="left:1075.7px;top:284px;width:16px;height:16px;color:#fbbf24;"><g fill="none" stroke="currentColor" stroke-width="1.5" stroke-linecap="round" stroke-linejoin="round"><path d="M14.25 9v6m-4.5 0V9M21 12a9 9 0 11-18 0 9 9 0 0118 0z"/></g></svg><span class="t lnk" style="left:1096.20px;top:282.0px;line-height:20px;letter-spacing:0.189px;">Nonaktifkan</span><svg class="i" viewBox="0 0 20 20" style="left:1190.8px;top:284px;width:16px;height:16px;color:#fbbf24;"><g fill="currentColor"><path fill-rule="evenodd" clip-rule="evenodd" d="M5.433 13.917l1.262-3.155A4 4 0 017.58 9.42l6.92-6.918a2.121 2.121 0 013 3l-6.92 6.918c-.383.383-.84.685-1.343.886l-3.154 1.262a.5.5 0 01-.65-.65z"/><path fill-rule="evenodd" clip-rule="evenodd" d="M3.5 5.75c0-.69.56-1.25 1.25-1.25H10A.75.75 0 0010 3H4.75A2.75 2.75 0 002 5.75v9.5A2.75 2.75 0 004.75 18h9.5A2.75 2.75 0 0017 15.25V10a.75.75 0 00-1.5 0v5.25c0 .69-.56 1.25-1.25 1.25h-9.5c-.69 0-1.25-.56-1.25-1.25v-9.5z"/></g></svg><span class="t lnk" style="left:1210.50px;top:282.0px;line-height:20px;letter-spacing:0.333px;">Ubah</span><div class="a" style="left:0;top:328px;width:1216px;height:1px;background:#242427"></div><span class="t td" style="left:-3.40px;top:355.0px;line-height:20px;letter-spacing:0.85px">B-004</span><svg class="i" style="left:63px;top:345px;width:40px;height:40px" viewBox="0 0 40 40"><defs><clipPath id="cc3"><circle cx="20" cy="20" r="20"/></clipPath></defs><g clip-path="url(#cc3)"><rect x="0.5" y="0.5" width="39" height="39" fill="none" stroke="#c0c0c0" stroke-width="1"/><g transform="translate(2,2)"><path d="M0.5 0.5 H11 L15.5 5 V15.5 H0.5 Z" fill="#f4f6fb" stroke="#b4b4b4" stroke-width="1"/><path d="M1 1 H10.8 L15 5.2 V15 H1 Z" fill="#c9daf4"/><path d="M1 5.2 Q2.5 3.2 4.2 4.4 Q6.2 3.6 7.2 5.4 Q8.8 5.6 8.6 7 H1 Z" fill="#ffffff"/><path d="M10 10 L15 6.5 V15 H10 Z" fill="#eef2fa"/><path d="M1 15 V13 Q3.5 9.5 7.5 10 Q12 10.5 15 15 Z" fill="#4fae3c"/><path d="M10.8 0.6 V5.2 H15.4 Z" fill="#ffffff" stroke="#b4b4b4" stroke-width=".8"/><path d="M7 16 L16.5 7.5" stroke="#18181b" stroke-width="1.6"/></g></g></svg><span class="t td" style="left:187.91px;top:355.0px;line-height:20px;letter-spacing:-0.005px;">Air Compressor 10 HP</span><span class="t td" style="left:408.57px;top:355.0px;line-height:20px;letter-spacing:0.246px;">Compressor</span><span class="t td" style="left:524.20px;top:355.0px;line-height:20px;letter-spacing:0.323px;">Rp 39.500.000,00</span><span class="t td" style="left:677.70px;top:355.0px;line-height:20px;letter-spacing:0.420px;">41</span><svg class="i" viewBox="0 0 24 24" style="left:768px;top:353px;width:24px;height:24px;color:#4ade80;"><g fill="none" stroke="currentColor" stroke-width="1.5" stroke-linecap="round" stroke-linejoin="round"><path d="M9 12.75L11.25 15 15 9.75M21 12a9 9 0 11-18 0 9 9 0 0118 0z"/></g></svg><svg class="i" viewBox="0 0 24 24" style="left:857px;top:353px;width:24px;height:24px;color:#4ade80;"><g fill="none" stroke="currentColor" stroke-width="1.5" stroke-linecap="round" stroke-linejoin="round"><path d="M9 12.75L11.25 15 15 9.75M21 12a9 9 0 11-18 0 9 9 0 0118 0z"/></g></svg><svg class="i" viewBox="0 0 24 24" style="left:937.2px;top:357px;width:16px;height:16px;color:#fbbf24;"><g fill="none" stroke="currentColor" stroke-width="1.5" stroke-linecap="round" stroke-linejoin="round"><path d="M13.5 6H5.25A2.25 2.25 0 003 8.25v10.5A2.25 2.25 0 005.25 21h10.5A2.25 2.25 0 0018 18.75V10.5m-10.5 6L21 3m0 0h-5.25M21 3v5.25"/></g></svg><span class="t lnk" style="left:956.38px;top:355.0px;line-height:20px;letter-spacing:0.022px;">Lihat di Website</span><svg class="i" viewBox="0 0 24 24" style="left:1075.7px;top:357px;width:16px;height:16px;color:#fbbf24;"><g fill="none" stroke="currentColor" stroke-width="1.5" stroke-linecap="round" stroke-linejoin="round"><path d="M14.25 9v6m-4.5 0V9M21 12a9 9 0 11-18 0 9 9 0 0118 0z"/></g></svg><span class="t lnk" style="left:1096.20px;top:355.0px;line-height:20px;letter-spacing:0.189px;">Nonaktifkan</span><svg class="i" viewBox="0 0 20 20" style="left:1190.8px;top:357px;width:16px;height:16px;color:#fbbf24;"><g fill="currentColor"><path fill-rule="evenodd" clip-rule="evenodd" d="M5.433 13.917l1.262-3.155A4 4 0 017.58 9.42l6.92-6.918a2.121 2.121 0 013 3l-6.92 6.918c-.383.383-.84.685-1.343.886l-3.154 1.262a.5.5 0 01-.65-.65z"/><path fill-rule="evenodd" clip-rule="evenodd" d="M3.5 5.75c0-.69.56-1.25 1.25-1.25H10A.75.75 0 0010 3H4.75A2.75 2.75 0 002 5.75v9.5A2.75 2.75 0 004.75 18h9.5A2.75 2.75 0 0017 15.25V10a.75.75 0 00-1.5 0v5.25c0 .69-.56 1.25-1.25 1.25h-9.5c-.69 0-1.25-.56-1.25-1.25v-9.5z"/></g></svg><span class="t lnk" style="left:1210.50px;top:355.0px;line-height:20px;letter-spacing:0.333px;">Ubah</span><div class="a" style="left:0;top:401px;width:1216px;height:1px;background:#242427"></div><span class="t td" style="left:-3.40px;top:428.0px;line-height:20px;letter-spacing:0.85px">B-005</span><svg class="i" style="left:63px;top:418px;width:40px;height:40px" viewBox="0 0 40 40"><defs><clipPath id="cc4"><circle cx="20" cy="20" r="20"/></clipPath></defs><g clip-path="url(#cc4)"><rect x="0.5" y="0.5" width="39" height="39" fill="none" stroke="#c0c0c0" stroke-width="1"/><g transform="translate(2,2)"><path d="M0.5 0.5 H11 L15.5 5 V15.5 H0.5 Z" fill="#f4f6fb" stroke="#b4b4b4" stroke-width="1"/><path d="M1 1 H10.8 L15 5.2 V15 H1 Z" fill="#c9daf4"/><path d="M1 5.2 Q2.5 3.2 4.2 4.4 Q6.2 3.6 7.2 5.4 Q8.8 5.6 8.6 7 H1 Z" fill="#ffffff"/><path d="M10 10 L15 6.5 V15 H10 Z" fill="#eef2fa"/><path d="M1 15 V13 Q3.5 9.5 7.5 10 Q12 10.5 15 15 Z" fill="#4fae3c"/><path d="M10.8 0.6 V5.2 H15.4 Z" fill="#ffffff" stroke="#b4b4b4" stroke-width=".8"/><path d="M7 16 L16.5 7.5" stroke="#18181b" stroke-width="1.6"/></g></g></svg><span class="t td" style="left:187.91px;top:428.0px;line-height:20px;letter-spacing:0.138px;">Air Compressor 20 HP Screw</span><span class="t td" style="left:408.57px;top:428.0px;line-height:20px;letter-spacing:0.246px;">Compressor</span><span class="t td" style="left:524.20px;top:428.0px;line-height:20px;letter-spacing:0.329px;">Rp 80.500.000,00</span><span class="t td" style="left:677.70px;top:428.0px;line-height:20px;letter-spacing:0.417px;">40</span><svg class="i" viewBox="0 0 24 24" style="left:768px;top:426px;width:24px;height:24px;color:#f87171;"><g fill="none" stroke="currentColor" stroke-width="1.5" stroke-linecap="round" stroke-linejoin="round"><path d="M9.75 9.75l4.5 4.5m0-4.5l-4.5 4.5M21 12a9 9 0 11-18 0 9 9 0 0118 0z"/></g></svg><svg class="i" viewBox="0 0 24 24" style="left:857px;top:426px;width:24px;height:24px;color:#4ade80;"><g fill="none" stroke="currentColor" stroke-width="1.5" stroke-linecap="round" stroke-linejoin="round"><path d="M9 12.75L11.25 15 15 9.75M21 12a9 9 0 11-18 0 9 9 0 0118 0z"/></g></svg><svg class="i" viewBox="0 0 24 24" style="left:937.2px;top:430px;width:16px;height:16px;color:#fbbf24;"><g fill="none" stroke="currentColor" stroke-width="1.5" stroke-linecap="round" stroke-linejoin="round"><path d="M13.5 6H5.25A2.25 2.25 0 003 8.25v10.5A2.25 2.25 0 005.25 21h10.5A2.25 2.25 0 0018 18.75V10.5m-10.5 6L21 3m0 0h-5.25M21 3v5.25"/></g></svg><span class="t lnk" style="left:956.38px;top:428.0px;line-height:20px;letter-spacing:0.022px;">Lihat di Website</span><svg class="i" viewBox="0 0 24 24" style="left:1075.7px;top:430px;width:16px;height:16px;color:#fbbf24;"><g fill="none" stroke="currentColor" stroke-width="1.5" stroke-linecap="round" stroke-linejoin="round"><path d="M14.25 9v6m-4.5 0V9M21 12a9 9 0 11-18 0 9 9 0 0118 0z"/></g></svg><span class="t lnk" style="left:1096.20px;top:428.0px;line-height:20px;letter-spacing:0.189px;">Nonaktifkan</span><svg class="i" viewBox="0 0 20 20" style="left:1190.8px;top:430px;width:16px;height:16px;color:#fbbf24;"><g fill="currentColor"><path fill-rule="evenodd" clip-rule="evenodd" d="M5.433 13.917l1.262-3.155A4 4 0 017.58 9.42l6.92-6.918a2.121 2.121 0 013 3l-6.92 6.918c-.383.383-.84.685-1.343.886l-3.154 1.262a.5.5 0 01-.65-.65z"/><path fill-rule="evenodd" clip-rule="evenodd" d="M3.5 5.75c0-.69.56-1.25 1.25-1.25H10A.75.75 0 0010 3H4.75A2.75 2.75 0 002 5.75v9.5A2.75 2.75 0 004.75 18h9.5A2.75 2.75 0 0017 15.25V10a.75.75 0 00-1.5 0v5.25c0 .69-.56 1.25-1.25 1.25h-9.5c-.69 0-1.25-.56-1.25-1.25v-9.5z"/></g></svg><span class="t lnk" style="left:1210.50px;top:428.0px;line-height:20px;letter-spacing:0.333px;">Ubah</span><div class="a" style="left:0;top:474px;width:1216px;height:1px;background:#242427"></div><span class="t td" style="left:-3.40px;top:501.0px;line-height:20px;letter-spacing:0.85px">B-006</span><svg class="i" style="left:63px;top:491px;width:40px;height:40px" viewBox="0 0 40 40"><defs><clipPath id="cc5"><circle cx="20" cy="20" r="20"/></clipPath></defs><g clip-path="url(#cc5)"><rect x="0.5" y="0.5" width="39" height="39" fill="none" stroke="#c0c0c0" stroke-width="1"/><g transform="translate(2,2)"><path d="M0.5 0.5 H11 L15.5 5 V15.5 H0.5 Z" fill="#f4f6fb" stroke="#b4b4b4" stroke-width="1"/><path d="M1 1 H10.8 L15 5.2 V15 H1 Z" fill="#c9daf4"/><path d="M1 5.2 Q2.5 3.2 4.2 4.4 Q6.2 3.6 7.2 5.4 Q8.8 5.6 8.6 7 H1 Z" fill="#ffffff"/><path d="M10 10 L15 6.5 V15 H10 Z" fill="#eef2fa"/><path d="M1 15 V13 Q3.5 9.5 7.5 10 Q12 10.5 15 15 Z" fill="#4fae3c"/><path d="M10.8 0.6 V5.2 H15.4 Z" fill="#ffffff" stroke="#b4b4b4" stroke-width=".8"/><path d="M7 16 L16.5 7.5" stroke="#18181b" stroke-width="1.6"/></g></g></svg><span class="t td" style="left:187.31px;top:501.0px;line-height:20px;letter-spacing:0.248px;">Compressor Dryer Industrial</span><span class="t td" style="left:408.57px;top:501.0px;line-height:20px;letter-spacing:0.246px;">Compressor</span><span class="t td" style="left:524.20px;top:501.0px;line-height:20px;letter-spacing:0.329px;">Rp 23.500.000,00</span><span class="t td" style="left:677.70px;top:501.0px;line-height:20px;letter-spacing:0.474px;">47</span><svg class="i" viewBox="0 0 24 24" style="left:768px;top:499px;width:24px;height:24px;color:#f87171;"><g fill="none" stroke="currentColor" stroke-width="1.5" stroke-linecap="round" stroke-linejoin="round"><path d="M9.75 9.75l4.5 4.5m0-4.5l-4.5 4.5M21 12a9 9 0 11-18 0 9 9 0 0118 0z"/></g></svg><svg class="i" viewBox="0 0 24 24" style="left:857px;top:499px;width:24px;height:24px;color:#4ade80;"><g fill="none" stroke="currentColor" stroke-width="1.5" stroke-linecap="round" stroke-linejoin="round"><path d="M9 12.75L11.25 15 15 9.75M21 12a9 9 0 11-18 0 9 9 0 0118 0z"/></g></svg><svg class="i" viewBox="0 0 24 24" style="left:937.2px;top:503px;width:16px;height:16px;color:#fbbf24;"><g fill="none" stroke="currentColor" stroke-width="1.5" stroke-linecap="round" stroke-linejoin="round"><path d="M13.5 6H5.25A2.25 2.25 0 003 8.25v10.5A2.25 2.25 0 005.25 21h10.5A2.25 2.25 0 0018 18.75V10.5m-10.5 6L21 3m0 0h-5.25M21 3v5.25"/></g></svg><span class="t lnk" style="left:956.38px;top:501.0px;line-height:20px;letter-spacing:0.022px;">Lihat di Website</span><svg class="i" viewBox="0 0 24 24" style="left:1075.7px;top:503px;width:16px;height:16px;color:#fbbf24;"><g fill="none" stroke="currentColor" stroke-width="1.5" stroke-linecap="round" stroke-linejoin="round"><path d="M14.25 9v6m-4.5 0V9M21 12a9 9 0 11-18 0 9 9 0 0118 0z"/></g></svg><span class="t lnk" style="left:1096.20px;top:501.0px;line-height:20px;letter-spacing:0.189px;">Nonaktifkan</span><svg class="i" viewBox="0 0 20 20" style="left:1190.8px;top:503px;width:16px;height:16px;color:#fbbf24;"><g fill="currentColor"><path fill-rule="evenodd" clip-rule="evenodd" d="M5.433 13.917l1.262-3.155A4 4 0 017.58 9.42l6.92-6.918a2.121 2.121 0 013 3l-6.92 6.918c-.383.383-.84.685-1.343.886l-3.154 1.262a.5.5 0 01-.65-.65z"/><path fill-rule="evenodd" clip-rule="evenodd" d="M3.5 5.75c0-.69.56-1.25 1.25-1.25H10A.75.75 0 0010 3H4.75A2.75 2.75 0 002 5.75v9.5A2.75 2.75 0 004.75 18h9.5A2.75 2.75 0 0017 15.25V10a.75.75 0 00-1.5 0v5.25c0 .69-.56 1.25-1.25 1.25h-9.5c-.69 0-1.25-.56-1.25-1.25v-9.5z"/></g></svg><span class="t lnk" style="left:1210.50px;top:501.0px;line-height:20px;letter-spacing:0.333px;">Ubah</span><div class="a" style="left:0;top:547px;width:1216px;height:1px;background:#242427"></div><span class="t td" style="left:-3.40px;top:574.0px;line-height:20px;letter-spacing:0.7px">B-007</span><svg class="i" style="left:63px;top:564px;width:40px;height:40px" viewBox="0 0 40 40"><defs><clipPath id="cc6"><circle cx="20" cy="20" r="20"/></clipPath></defs><g clip-path="url(#cc6)"><rect x="0.5" y="0.5" width="39" height="39" fill="none" stroke="#c0c0c0" stroke-width="1"/><g transform="translate(2,2)"><path d="M0.5 0.5 H11 L15.5 5 V15.5 H0.5 Z" fill="#f4f6fb" stroke="#b4b4b4" stroke-width="1"/><path d="M1 1 H10.8 L15 5.2 V15 H1 Z" fill="#c9daf4"/><path d="M1 5.2 Q2.5 3.2 4.2 4.4 Q6.2 3.6 7.2 5.4 Q8.8 5.6 8.6 7 H1 Z" fill="#ffffff"/><path d="M10 10 L15 6.5 V15 H10 Z" fill="#eef2fa"/><path d="M1 15 V13 Q3.5 9.5 7.5 10 Q12 10.5 15 15 Z" fill="#4fae3c"/><path d="M10.8 0.6 V5.2 H15.4 Z" fill="#ffffff" stroke="#b4b4b4" stroke-width=".8"/><path d="M7 16 L16.5 7.5" stroke="#18181b" stroke-width="1.6"/></g></g></svg><span class="t td" style="left:187.33px;top:574.0px;line-height:20px;letter-spacing:0.029px;">Generator Set 100 kVA</span><span class="t td" style="left:408.71px;top:574.0px;line-height:20px;letter-spacing:0.108px;">Generator Set</span><span class="t td" style="left:524.20px;top:574.0px;line-height:20px;letter-spacing:0.371px;">Rp 248.000.000,00</span><span class="t td" style="left:677.70px;top:574.0px;line-height:20px;letter-spacing:0.418px;">46</span><svg class="i" viewBox="0 0 24 24" style="left:768px;top:572px;width:24px;height:24px;color:#f87171;"><g fill="none" stroke="currentColor" stroke-width="1.5" stroke-linecap="round" stroke-linejoin="round"><path d="M9.75 9.75l4.5 4.5m0-4.5l-4.5 4.5M21 12a9 9 0 11-18 0 9 9 0 0118 0z"/></g></svg><svg class="i" viewBox="0 0 24 24" style="left:857px;top:572px;width:24px;height:24px;color:#4ade80;"><g fill="none" stroke="currentColor" stroke-width="1.5" stroke-linecap="round" stroke-linejoin="round"><path d="M9 12.75L11.25 15 15 9.75M21 12a9 9 0 11-18 0 9 9 0 0118 0z"/></g></svg><svg class="i" viewBox="0 0 24 24" style="left:937.2px;top:576px;width:16px;height:16px;color:#fbbf24;"><g fill="none" stroke="currentColor" stroke-width="1.5" stroke-linecap="round" stroke-linejoin="round"><path d="M13.5 6H5.25A2.25 2.25 0 003 8.25v10.5A2.25 2.25 0 005.25 21h10.5A2.25 2.25 0 0018 18.75V10.5m-10.5 6L21 3m0 0h-5.25M21 3v5.25"/></g></svg><span class="t lnk" style="left:956.38px;top:574.0px;line-height:20px;letter-spacing:0.022px;">Lihat di Website</span><svg class="i" viewBox="0 0 24 24" style="left:1075.7px;top:576px;width:16px;height:16px;color:#fbbf24;"><g fill="none" stroke="currentColor" stroke-width="1.5" stroke-linecap="round" stroke-linejoin="round"><path d="M14.25 9v6m-4.5 0V9M21 12a9 9 0 11-18 0 9 9 0 0118 0z"/></g></svg><span class="t lnk" style="left:1096.20px;top:574.0px;line-height:20px;letter-spacing:0.189px;">Nonaktifkan</span><svg class="i" viewBox="0 0 20 20" style="left:1190.8px;top:576px;width:16px;height:16px;color:#fbbf24;"><g fill="currentColor"><path fill-rule="evenodd" clip-rule="evenodd" d="M5.433 13.917l1.262-3.155A4 4 0 017.58 9.42l6.92-6.918a2.121 2.121 0 013 3l-6.92 6.918c-.383.383-.84.685-1.343.886l-3.154 1.262a.5.5 0 01-.65-.65z"/><path fill-rule="evenodd" clip-rule="evenodd" d="M3.5 5.75c0-.69.56-1.25 1.25-1.25H10A.75.75 0 0010 3H4.75A2.75 2.75 0 002 5.75v9.5A2.75 2.75 0 004.75 18h9.5A2.75 2.75 0 0017 15.25V10a.75.75 0 00-1.5 0v5.25c0 .69-.56 1.25-1.25 1.25h-9.5c-.69 0-1.25-.56-1.25-1.25v-9.5z"/></g></svg><span class="t lnk" style="left:1210.50px;top:574.0px;line-height:20px;letter-spacing:0.333px;">Ubah</span><div class="a" style="left:0;top:620px;width:1216px;height:1px;background:#242427"></div><span class="t td" style="left:-3.40px;top:647.0px;line-height:20px;letter-spacing:0.85px">B-008</span><svg class="i" style="left:63px;top:637px;width:40px;height:40px" viewBox="0 0 40 40"><defs><clipPath id="cc7"><circle cx="20" cy="20" r="20"/></clipPath></defs><g clip-path="url(#cc7)"><rect x="0.5" y="0.5" width="39" height="39" fill="none" stroke="#c0c0c0" stroke-width="1"/><g transform="translate(2,2)"><path d="M0.5 0.5 H11 L15.5 5 V15.5 H0.5 Z" fill="#f4f6fb" stroke="#b4b4b4" stroke-width="1"/><path d="M1 1 H10.8 L15 5.2 V15 H1 Z" fill="#c9daf4"/><path d="M1 5.2 Q2.5 3.2 4.2 4.4 Q6.2 3.6 7.2 5.4 Q8.8 5.6 8.6 7 H1 Z" fill="#ffffff"/><path d="M10 10 L15 6.5 V15 H10 Z" fill="#eef2fa"/><path d="M1 15 V13 Q3.5 9.5 7.5 10 Q12 10.5 15 15 Z" fill="#4fae3c"/><path d="M10.8 0.6 V5.2 H15.4 Z" fill="#ffffff" stroke="#b4b4b4" stroke-width=".8"/><path d="M7 16 L16.5 7.5" stroke="#18181b" stroke-width="1.6"/></g></g></svg><span class="t td" style="left:187.33px;top:647.0px;line-height:20px;letter-spacing:0.140px;">Generator Set 250 kVA</span><span class="t td" style="left:408.71px;top:647.0px;line-height:20px;letter-spacing:0.108px;">Generator Set</span><span class="t td" style="left:524.20px;top:647.0px;line-height:20px;letter-spacing:0.371px;">Rp 452.000.000,00</span><span class="t td" style="left:677.70px;top:647.0px;line-height:20px;letter-spacing:0.384px;">49</span><svg class="i" viewBox="0 0 24 24" style="left:768px;top:645px;width:24px;height:24px;color:#f87171;"><g fill="none" stroke="currentColor" stroke-width="1.5" stroke-linecap="round" stroke-linejoin="round"><path d="M9.75 9.75l4.5 4.5m0-4.5l-4.5 4.5M21 12a9 9 0 11-18 0 9 9 0 0118 0z"/></g></svg><svg class="i" viewBox="0 0 24 24" style="left:857px;top:645px;width:24px;height:24px;color:#4ade80;"><g fill="none" stroke="currentColor" stroke-width="1.5" stroke-linecap="round" stroke-linejoin="round"><path d="M9 12.75L11.25 15 15 9.75M21 12a9 9 0 11-18 0 9 9 0 0118 0z"/></g></svg><svg class="i" viewBox="0 0 24 24" style="left:937.2px;top:649px;width:16px;height:16px;color:#fbbf24;"><g fill="none" stroke="currentColor" stroke-width="1.5" stroke-linecap="round" stroke-linejoin="round"><path d="M13.5 6H5.25A2.25 2.25 0 003 8.25v10.5A2.25 2.25 0 005.25 21h10.5A2.25 2.25 0 0018 18.75V10.5m-10.5 6L21 3m0 0h-5.25M21 3v5.25"/></g></svg><span class="t lnk" style="left:956.38px;top:647.0px;line-height:20px;letter-spacing:0.022px;">Lihat di Website</span><svg class="i" viewBox="0 0 24 24" style="left:1075.7px;top:649px;width:16px;height:16px;color:#fbbf24;"><g fill="none" stroke="currentColor" stroke-width="1.5" stroke-linecap="round" stroke-linejoin="round"><path d="M14.25 9v6m-4.5 0V9M21 12a9 9 0 11-18 0 9 9 0 0118 0z"/></g></svg><span class="t lnk" style="left:1096.20px;top:647.0px;line-height:20px;letter-spacing:0.189px;">Nonaktifkan</span><svg class="i" viewBox="0 0 20 20" style="left:1190.8px;top:649px;width:16px;height:16px;color:#fbbf24;"><g fill="currentColor"><path fill-rule="evenodd" clip-rule="evenodd" d="M5.433 13.917l1.262-3.155A4 4 0 017.58 9.42l6.92-6.918a2.121 2.121 0 013 3l-6.92 6.918c-.383.383-.84.685-1.343.886l-3.154 1.262a.5.5 0 01-.65-.65z"/><path fill-rule="evenodd" clip-rule="evenodd" d="M3.5 5.75c0-.69.56-1.25 1.25-1.25H10A.75.75 0 0010 3H4.75A2.75 2.75 0 002 5.75v9.5A2.75 2.75 0 004.75 18h9.5A2.75 2.75 0 0017 15.25V10a.75.75 0 00-1.5 0v5.25c0 .69-.56 1.25-1.25 1.25h-9.5c-.69 0-1.25-.56-1.25-1.25v-9.5z"/></g></svg><span class="t lnk" style="left:1210.50px;top:647.0px;line-height:20px;letter-spacing:0.333px;">Ubah</span><div class="a" style="left:0;top:693px;width:1216px;height:1px;background:#242427"></div><span class="t td" style="left:-3.40px;top:720.0px;line-height:20px;letter-spacing:0.85px">B-009</span><svg class="i" style="left:63px;top:710px;width:40px;height:40px" viewBox="0 0 40 40"><defs><clipPath id="cc8"><circle cx="20" cy="20" r="20"/></clipPath></defs><g clip-path="url(#cc8)"><rect x="0.5" y="0.5" width="39" height="39" fill="none" stroke="#c0c0c0" stroke-width="1"/><g transform="translate(2,2)"><path d="M0.5 0.5 H11 L15.5 5 V15.5 H0.5 Z" fill="#f4f6fb" stroke="#b4b4b4" stroke-width="1"/><path d="M1 1 H10.8 L15 5.2 V15 H1 Z" fill="#c9daf4"/><path d="M1 5.2 Q2.5 3.2 4.2 4.4 Q6.2 3.6 7.2 5.4 Q8.8 5.6 8.6 7 H1 Z" fill="#ffffff"/><path d="M10 10 L15 6.5 V15 H10 Z" fill="#eef2fa"/><path d="M1 15 V13 Q3.5 9.5 7.5 10 Q12 10.5 15 15 Z" fill="#4fae3c"/><path d="M10.8 0.6 V5.2 H15.4 Z" fill="#ffffff" stroke="#b4b4b4" stroke-width=".8"/><path d="M7 16 L16.5 7.5" stroke="#18181b" stroke-width="1.6"/></g></g></svg><span class="t td" style="left:186.86px;top:720.0px;line-height:20px;letter-spacing:0.074px;">Panel ATS Genset Otomatis</span><span class="t td" style="left:408.71px;top:720.0px;line-height:20px;letter-spacing:0.108px;">Generator Set</span><span class="t td" style="left:524.20px;top:720.0px;line-height:20px;letter-spacing:0.329px;">Rp 52.000.000,00</span><span class="t td" style="left:677.12px;top:720.0px;line-height:20px;letter-spacing:1.032px;">53</span><svg class="i" viewBox="0 0 24 24" style="left:768px;top:718px;width:24px;height:24px;color:#f87171;"><g fill="none" stroke="currentColor" stroke-width="1.5" stroke-linecap="round" stroke-linejoin="round"><path d="M9.75 9.75l4.5 4.5m0-4.5l-4.5 4.5M21 12a9 9 0 11-18 0 9 9 0 0118 0z"/></g></svg><svg class="i" viewBox="0 0 24 24" style="left:857px;top:718px;width:24px;height:24px;color:#4ade80;"><g fill="none" stroke="currentColor" stroke-width="1.5" stroke-linecap="round" stroke-linejoin="round"><path d="M9 12.75L11.25 15 15 9.75M21 12a9 9 0 11-18 0 9 9 0 0118 0z"/></g></svg><svg class="i" viewBox="0 0 24 24" style="left:937.2px;top:722px;width:16px;height:16px;color:#fbbf24;"><g fill="none" stroke="currentColor" stroke-width="1.5" stroke-linecap="round" stroke-linejoin="round"><path d="M13.5 6H5.25A2.25 2.25 0 003 8.25v10.5A2.25 2.25 0 005.25 21h10.5A2.25 2.25 0 0018 18.75V10.5m-10.5 6L21 3m0 0h-5.25M21 3v5.25"/></g></svg><span class="t lnk" style="left:956.38px;top:720.0px;line-height:20px;letter-spacing:0.022px;">Lihat di Website</span><svg class="i" viewBox="0 0 24 24" style="left:1075.7px;top:722px;width:16px;height:16px;color:#fbbf24;"><g fill="none" stroke="currentColor" stroke-width="1.5" stroke-linecap="round" stroke-linejoin="round"><path d="M14.25 9v6m-4.5 0V9M21 12a9 9 0 11-18 0 9 9 0 0118 0z"/></g></svg><span class="t lnk" style="left:1096.20px;top:720.0px;line-height:20px;letter-spacing:0.189px;">Nonaktifkan</span><svg class="i" viewBox="0 0 20 20" style="left:1190.8px;top:722px;width:16px;height:16px;color:#fbbf24;"><g fill="currentColor"><path fill-rule="evenodd" clip-rule="evenodd" d="M5.433 13.917l1.262-3.155A4 4 0 017.58 9.42l6.92-6.918a2.121 2.121 0 013 3l-6.92 6.918c-.383.383-.84.685-1.343.886l-3.154 1.262a.5.5 0 01-.65-.65z"/><path fill-rule="evenodd" clip-rule="evenodd" d="M3.5 5.75c0-.69.56-1.25 1.25-1.25H10A.75.75 0 0010 3H4.75A2.75 2.75 0 002 5.75v9.5A2.75 2.75 0 004.75 18h9.5A2.75 2.75 0 0017 15.25V10a.75.75 0 00-1.5 0v5.25c0 .69-.56 1.25-1.25 1.25h-9.5c-.69 0-1.25-.56-1.25-1.25v-9.5z"/></g></svg><span class="t lnk" style="left:1210.50px;top:720.0px;line-height:20px;letter-spacing:0.333px;">Ubah</span><div class="a" style="left:0;top:766px;width:1216px;height:1px;background:#242427"></div><span class="t td" style="left:-3.40px;top:793.0px;line-height:20px;letter-spacing:0.1px">B-010</span><svg class="i" style="left:63px;top:783px;width:40px;height:40px" viewBox="0 0 40 40"><defs><clipPath id="cc9"><circle cx="20" cy="20" r="20"/></clipPath></defs><g clip-path="url(#cc9)"><rect x="0.5" y="0.5" width="39" height="39" fill="none" stroke="#c0c0c0" stroke-width="1"/><g transform="translate(2,2)"><path d="M0.5 0.5 H11 L15.5 5 V15.5 H0.5 Z" fill="#f4f6fb" stroke="#b4b4b4" stroke-width="1"/><path d="M1 1 H10.8 L15 5.2 V15 H1 Z" fill="#c9daf4"/><path d="M1 5.2 Q2.5 3.2 4.2 4.4 Q6.2 3.6 7.2 5.4 Q8.8 5.6 8.6 7 H1 Z" fill="#ffffff"/><path d="M10 10 L15 6.5 V15 H10 Z" fill="#eef2fa"/><path d="M1 15 V13 Q3.5 9.5 7.5 10 Q12 10.5 15 15 Z" fill="#4fae3c"/><path d="M10.8 0.6 V5.2 H15.4 Z" fill="#ffffff" stroke="#b4b4b4" stroke-width=".8"/><path d="M7 16 L16.5 7.5" stroke="#18181b" stroke-width="1.6"/></g></g></svg><span class="t td" style="left:187.08px;top:793.0px;line-height:20px;letter-spacing:0.253px;">Sparepart Service Kit Industri</span><span class="t td" style="left:408.57px;top:793.0px;line-height:20px;letter-spacing:0.246px;">Compressor</span><span class="t td" style="left:524.20px;top:793.0px;line-height:20px;letter-spacing:0.353px;">Rp 2.200.000,00</span><span class="t td" style="left:677.12px;top:793.0px;line-height:20px;letter-spacing:1.057px;">57</span><svg class="i" viewBox="0 0 24 24" style="left:768px;top:791px;width:24px;height:24px;color:#f87171;"><g fill="none" stroke="currentColor" stroke-width="1.5" stroke-linecap="round" stroke-linejoin="round"><path d="M9.75 9.75l4.5 4.5m0-4.5l-4.5 4.5M21 12a9 9 0 11-18 0 9 9 0 0118 0z"/></g></svg><svg class="i" viewBox="0 0 24 24" style="left:857px;top:791px;width:24px;height:24px;color:#4ade80;"><g fill="none" stroke="currentColor" stroke-width="1.5" stroke-linecap="round" stroke-linejoin="round"><path d="M9 12.75L11.25 15 15 9.75M21 12a9 9 0 11-18 0 9 9 0 0118 0z"/></g></svg><svg class="i" viewBox="0 0 24 24" style="left:937.2px;top:795px;width:16px;height:16px;color:#fbbf24;"><g fill="none" stroke="currentColor" stroke-width="1.5" stroke-linecap="round" stroke-linejoin="round"><path d="M13.5 6H5.25A2.25 2.25 0 003 8.25v10.5A2.25 2.25 0 005.25 21h10.5A2.25 2.25 0 0018 18.75V10.5m-10.5 6L21 3m0 0h-5.25M21 3v5.25"/></g></svg><span class="t lnk" style="left:956.38px;top:793.0px;line-height:20px;letter-spacing:0.022px;">Lihat di Website</span><svg class="i" viewBox="0 0 24 24" style="left:1075.7px;top:795px;width:16px;height:16px;color:#fbbf24;"><g fill="none" stroke="currentColor" stroke-width="1.5" stroke-linecap="round" stroke-linejoin="round"><path d="M14.25 9v6m-4.5 0V9M21 12a9 9 0 11-18 0 9 9 0 0118 0z"/></g></svg><span class="t lnk" style="left:1096.20px;top:793.0px;line-height:20px;letter-spacing:0.189px;">Nonaktifkan</span><svg class="i" viewBox="0 0 20 20" style="left:1190.8px;top:795px;width:16px;height:16px;color:#fbbf24;"><g fill="currentColor"><path fill-rule="evenodd" clip-rule="evenodd" d="M5.433 13.917l1.262-3.155A4 4 0 017.58 9.42l6.92-6.918a2.121 2.121 0 013 3l-6.92 6.918c-.383.383-.84.685-1.343.886l-3.154 1.262a.5.5 0 01-.65-.65z"/><path fill-rule="evenodd" clip-rule="evenodd" d="M3.5 5.75c0-.69.56-1.25 1.25-1.25H10A.75.75 0 0010 3H4.75A2.75 2.75 0 002 5.75v9.5A2.75 2.75 0 004.75 18h9.5A2.75 2.75 0 0017 15.25V10a.75.75 0 00-1.5 0v5.25c0 .69-.56 1.25-1.25 1.25h-9.5c-.69 0-1.25-.56-1.25-1.25v-9.5z"/></g></svg><span class="t lnk" style="left:1210.50px;top:793.0px;line-height:20px;letter-spacing:0.333px;">Ubah</span><div class="a" style="left:0;top:839px;width:1216px;height:15px;background:#2c2c2c"><svg class="i" style="left:0;top:0;width:15px;height:15px"><path d="M5.2 7.5 L10.9 3.9 V11.1 Z" fill="#a0a0a0" stroke="#a0a0a0" stroke-width="2" stroke-linejoin="round"/></svg><div class="a" style="left:121px;top:3px;width:1030px;height:9px;border-radius:4.5px;background:#a0a0a0"></div><svg class="i" style="left:1201px;top:0;width:15px;height:15px"><path d="M9.8 7.5 L4.1 3.9 V11.1 Z" fill="#a0a0a0" stroke="#a0a0a0" stroke-width="2" stroke-linejoin="round"/></svg></div><div class="a" style="left:0;top:854px;width:1216px;height:1px;background:#2f2f32"></div><span class="t pg" style="left:23.96px;top:875.0px;line-height:20px;letter-spacing:0.091px;">Menampilkan 1 sampai 10 dari 10 hasil</span><div class="a" style="left:510px;top:867px;width:196px;height:36px;border-radius:8px;background:#232326;box-shadow:0 0 0 1px #464649"></div><div class="a" style="left:614.5px;top:867px;width:1px;height:36px;background:#3a3a3d"></div><span class="t pre" style="left:521.90px;top:875.0px;line-height:20px;letter-spacing:0.162px;">per halaman</span><span class="t td" style="left:628.35px;top:875.0px;line-height:20px;letter-spacing:-1.450px;">10</span><svg class="i" viewBox="0 0 20 20" style="left:677.5px;top:875px;width:20px;height:20px;color:#71717a;"><g fill="currentColor"><path fill-rule="evenodd" clip-rule="evenodd" d="M5.23 7.21a.75.75 0 011.06.02L10 11.168l3.71-3.938a.75.75 0 111.08 1.04l-4.25 4.5a.75.75 0 01-1.08 0l-4.25-4.5a.75.75 0 01.02-1.06z"/></g></svg></div></body></html>
